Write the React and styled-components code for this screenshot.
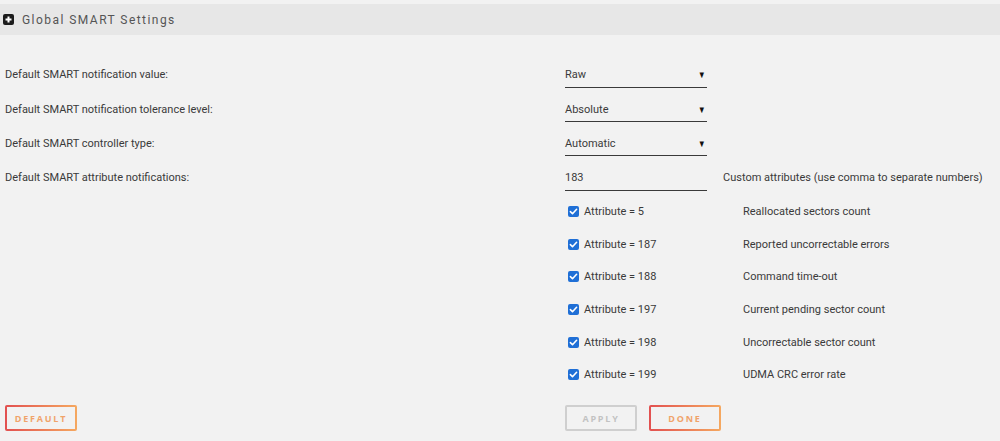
import React from "react";
import styled, { createGlobalStyle } from "styled-components";

const Global = createGlobalStyle`
  html, body { margin: 0; padding: 0; background: #f2f2f2; }
  body { font-family: Roboto, "Liberation Sans", Arial, sans-serif; color: #3c3c3c; }
`;

const Page = styled.div`
  width: 1000px;
  height: 441px;
  overflow: hidden;
  padding-top: 4px;
  box-sizing: border-box;
`;

const Header = styled.div`
  height: 31px;
  background: #e7e7e7;
  display: flex;
  align-items: center;
  gap: 8px;
  padding-left: 3px;
`;

const HeaderTitle = styled.span`
  font-size: 12px;
  letter-spacing: 1.45px;
  color: #555;
  padding-top: 1px;
`;

const Form = styled.div`
  padding: 22.5px 0 0 5px;
  display: flex;
  flex-direction: column;
`;

const Row = styled.div`
  display: grid;
  grid-template-columns: 560px 158px 1fr;
  align-items: center;
  height: ${(p) => p.$h}px;
`;

const Label = styled.span`
  font-size: 11px;
  color: #3a3a3a;
`;

const Field = styled.div`
  height: 26px;
  border-bottom: 1px solid #3a3a3a;
  width: 142px;
  box-sizing: border-box;
  display: flex;
  align-items: center;
  justify-content: space-between;
  font-size: 11px;
  color: #3a3a3a;
  padding-right: 1px;
  padding-top: 1px;
`;

const Arrow = styled.span`
  font-size: 9.5px;
  color: #111;
  transform: scaleX(0.8);
`;

const Note = styled.span`
  font-size: 11px;
  color: #3a3a3a;
`;

const CheckCell = styled.label`
  display: flex;
  align-items: center;
  gap: 5px;
  padding-left: 3px;
  font-size: 11px;
  color: #3a3a3a;
`;

const Desc = styled.span`
  font-size: 11px;
  color: #3a3a3a;
  padding-left: 20px;
`;

const Buttons = styled.div`
  display: grid;
  grid-template-columns: 560px auto;
  padding: 14px 0 0 5px;
`;

const ButtonGroup = styled.div`
  display: flex;
  gap: 12px;
`;

const Button = styled.button`
  width: 72px;
  height: 26px;
  font-family: "Open Sans", Roboto, sans-serif;
  font-weight: 700;
  font-size: 9px;
  letter-spacing: 1.8px;
  border: 2px solid transparent;
  border-radius: 2px;
  cursor: pointer;
  color: ${(p) => (p.$disabled ? "#c2c2c2" : "#f0a36a")};
  background: ${(p) =>
    p.$disabled
      ? "linear-gradient(#f2f2f2,#f2f2f2) padding-box, linear-gradient(#cfcfcf,#cfcfcf) border-box"
      : "linear-gradient(#f2f2f2,#f2f2f2) padding-box, linear-gradient(90deg,#e25050,#f5a860) border-box"};
  padding: 0;
`;

const PlusIcon = () => (
  <svg width="11" height="11" viewBox="0 0 11 11">
    <rect x="0" y="0" width="11" height="11" rx="2" fill="#1c1c1c" />
    <rect x="2.5" y="4.5" width="6" height="2" fill="#fff" />
    <rect x="4.5" y="2.5" width="2" height="6" fill="#fff" />
  </svg>
);

const CheckIcon = () => (
  <svg width="11" height="11" viewBox="0 0 11 11">
    <rect x="0" y="0" width="11" height="11" rx="2" fill="#1f6fd6" />
    <path d="M2.4 5.6 L4.5 7.7 L8.6 3.3" stroke="#fff" strokeWidth="1.6" fill="none" strokeLinecap="round" strokeLinejoin="round" />
  </svg>
);

const selects = [
  ["Default SMART notification value:", "Raw"],
  ["Default SMART notification tolerance level:", "Absolute"],
  ["Default SMART controller type:", "Automatic"],
];

const attrs = [
  [5, "Reallocated sectors count"],
  [187, "Reported uncorrectable errors"],
  [188, "Command time-out"],
  [197, "Current pending sector count"],
  [198, "Uncorrectable sector count"],
  [199, "UDMA CRC error rate"],
];

export default function App() {
  return (
    <Page>
      <Global />
      <Header>
        <PlusIcon />
        <HeaderTitle>Global SMART Settings</HeaderTitle>
      </Header>
      <Form>
        {selects.map(([l, v]) => (
          <Row key={l} $h={34.4}>
            <Label>{l}</Label>
            <Field>
              <span>{v}</span>
              <Arrow>▼</Arrow>
            </Field>
            <span />
          </Row>
        ))}
        <Row $h={34.4}>
          <Label>Default SMART attribute notifications:</Label>
          <Field>
            <span>183</span>
          </Field>
          <Note>Custom attributes (use comma to separate numbers)</Note>
        </Row>
        {attrs.map(([n, d]) => (
          <Row key={n} $h={32.7}>
            <span />
            <CheckCell>
              <CheckIcon />
              <span>Attribute = {n}</span>
            </CheckCell>
            <Desc>{d}</Desc>
          </Row>
        ))}
      </Form>
      <Buttons>
        <div>
          <Button>DEFAULT</Button>
        </div>
        <ButtonGroup>
          <Button $disabled>APPLY</Button>
          <Button>DONE</Button>
        </ButtonGroup>
      </Buttons>
    </Page>
  );
}
